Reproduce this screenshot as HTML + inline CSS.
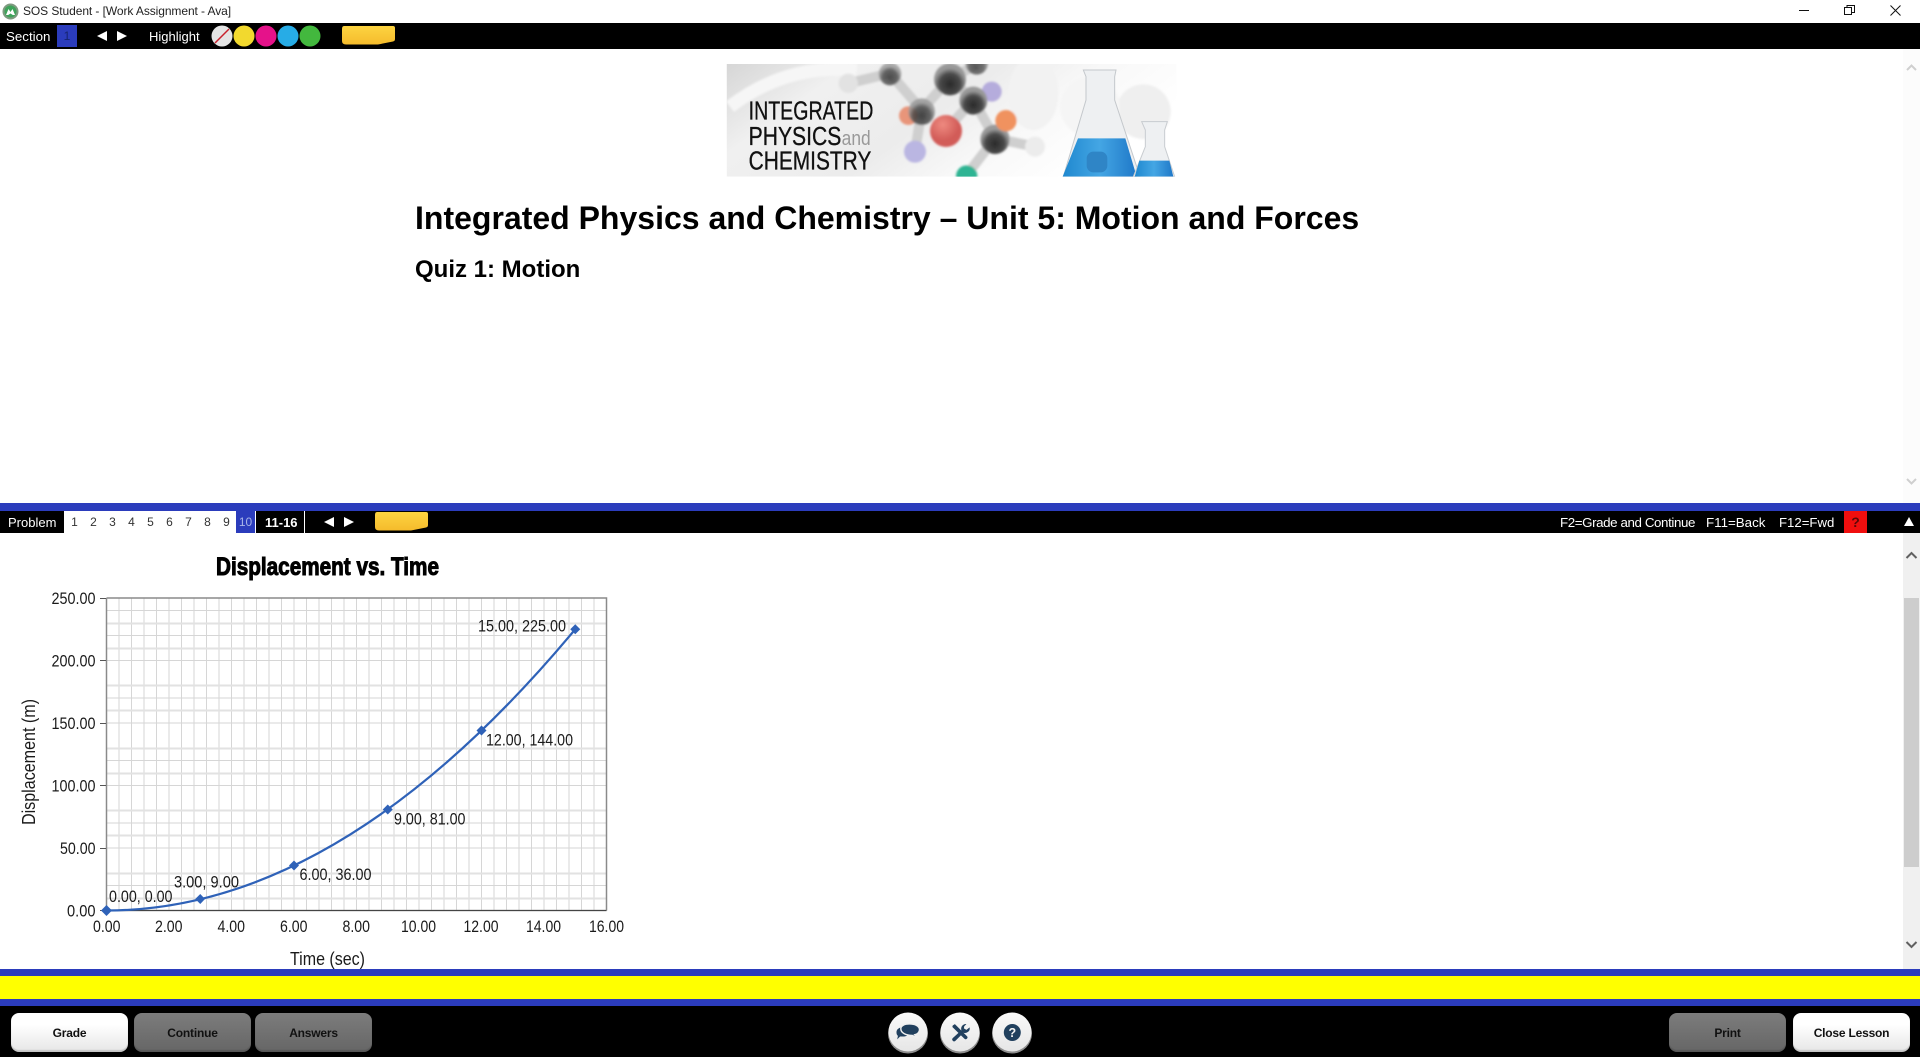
<!DOCTYPE html>
<html><head><meta charset="utf-8"><title>SOS Student</title>
<style>
*{box-sizing:border-box}
html,body{margin:0;padding:0;width:1920px;height:1057px;overflow:hidden;background:#fff;font-family:"Liberation Sans",sans-serif}
.a{position:absolute}
.t{position:absolute;white-space:nowrap;line-height:1}
.btn{position:absolute;top:1013px;height:39px;width:117px;border-radius:8px;font:bold 12px "Liberation Sans",sans-serif;letter-spacing:-.2px;color:#111;display:flex;align-items:center;justify-content:center;box-shadow:inset 0 -2px 1px rgba(0,0,0,.15)}
.on{background:linear-gradient(#fff 30%,#e6e6e6)}
.off{background:linear-gradient(#7c7c7c,#666)}
.n{position:absolute;top:511px;height:22px;width:19px;text-align:center;font-size:12px;line-height:22px;color:#333}
h1,h2{margin:0;position:absolute;white-space:nowrap;color:#000;font-weight:bold}
</style></head><body>

<!-- title bar -->
<svg class="a" style="left:2px;top:3px" width="17" height="17" viewBox="0 0 17 17"><circle cx="8.5" cy="8.5" r="8" fill="#7f9a80"/><circle cx="8.5" cy="8.5" r="6" fill="#3fa35a"/><path d="M4 12 L6.500 6 L8.500 9 L10.500 6 L13 12 L10.800 12 L8.500 10.500 L6.200 12Z" fill="#fff"/></svg>
<div class="t" style="left:23px;top:5px;font-size:12px;letter-spacing:-.08px;color:#222">SOS Student - [Work Assignment - Ava]</div>
<svg class="a" style="left:1790px;top:0" width="120" height="22" fill="none" stroke="#111" stroke-width="1">
<path d="M9 10.5H19"/><rect x="54.5" y="7.5" width="7" height="7"/><path d="M57 7.5V5.5H64.5V12.5H61.5"/><path d="M100.5 5.5L110.5 15.5M110.5 5.5L100.5 15.5"/></svg>

<!-- section toolbar -->
<div class="a" style="left:0;top:23px;width:1920px;height:26px;background:#000"></div>
<div class="t" style="left:6px;top:29.5px;font-size:13.33px;color:#fff">Section</div>
<div class="a" style="left:57px;top:25px;width:20px;height:22px;background:#2b3cbc;color:#16246e;font-size:12px;text-align:center;line-height:22px">1</div>
<div class="t" style="left:149px;top:29.5px;font-size:13px;color:#fff">Highlight</div>
<svg class="a" style="left:90px;top:23px" width="320" height="26">
<polygon points="7,13 17,8 17,18" fill="#fff"/><polygon points="27,8 27,18 37,13" fill="#fff"/>
<circle cx="132" cy="13" r="10.5" fill="#e4e4e4"/><path d="M125 20L139 6" stroke="#c8202c" stroke-width="1.5"/>
<circle cx="154" cy="13" r="10.5" fill="#f2d92e"/><circle cx="176" cy="13" r="10.5" fill="#e5128a"/>
<circle cx="198" cy="13" r="10.5" fill="#27ace6"/><circle cx="220" cy="13" r="10.5" fill="#43b83e"/>
<defs><linearGradient id="st" x1="0" y1="0" x2="0" y2="1"><stop offset="0" stop-color="#fdd441"/><stop offset="1" stop-color="#f5bb2c"/></linearGradient></defs>
<path d="M254 3H303Q305 3 305 5V16Q305 18 303 18.500L288 21.500H256Q252 21.500 252 18V6Q252 3 254 3Z" fill="url(#st)"/>
</svg>

<!-- upper content -->
<svg class="a" style="left:700px;top:50px" width="500" height="140" viewBox="0 0 1500 420">
<defs>
<clipPath id="lc"><rect x="80" y="42" width="1350" height="338"/></clipPath>
<linearGradient id="bg" x1="0" y1="0" x2="1" y2="0.35"><stop offset="0" stop-color="#d6d6d6"/><stop offset=".25" stop-color="#f0f0f0"/><stop offset=".55" stop-color="#ececec"/><stop offset=".75" stop-color="#f8f8f8"/><stop offset="1" stop-color="#fff"/></linearGradient>
<linearGradient id="fl" x1="0" y1="0" x2="1" y2="0"><stop offset="0" stop-color="#1f88cf"/><stop offset=".5" stop-color="#44a6e4"/><stop offset="1" stop-color="#1f78c8"/></linearGradient>
<radialGradient id="dk" cx=".5" cy=".65"><stop offset="0" stop-color="#2a2a2a"/><stop offset=".65" stop-color="#4a4a4a"/><stop offset="1" stop-color="#9a9a9a"/></radialGradient>
<radialGradient id="rd" cx=".4" cy=".3"><stop offset="0" stop-color="#ee8a80"/><stop offset="1" stop-color="#d25c58"/></radialGradient>
<filter id="bl" x="-5%" y="-5%" width="110%" height="110%"><feGaussianBlur stdDeviation="3"/></filter>
</defs>
<g clip-path="url(#lc)">
<rect x="80" y="42" width="1350" height="338" fill="url(#bg)"/>
<g filter="url(#bl)">
<ellipse cx="1000" cy="130" rx="75" ry="110" fill="#f2f2f2"/>
<circle cx="1330" cy="185" r="82" fill="#efefef"/><circle cx="1170" cy="170" r="90" fill="#f5f5f5"/>
<path d="M90 170Q260 40 470 60" stroke="#f6f6f6" stroke-width="40" fill="none"/>
<g stroke="#cfcfcf" stroke-width="30" fill="none">
<path d="M445 100L570 70L665 180L750 85L820 150L885 265L1005 290"/><path d="M665 180L645 305"/><path d="M885 265L800 375"/><path d="M820 150L738 240"/><path d="M750 85L830 45"/></g>
<circle cx="445" cy="100" r="29" fill="#e2e2e2"/><circle cx="570" cy="72" r="34" fill="url(#dk)" opacity=".8"/><circle cx="830" cy="40" r="34" fill="url(#dk)" opacity=".75"/>
<circle cx="625" cy="197" r="28" fill="#e8957a"/><circle cx="665" cy="185" r="40" fill="url(#dk)" opacity=".85"/>
<circle cx="750" cy="88" r="48" fill="url(#dk)"/>
<circle cx="875" cy="125" r="30" fill="#b5acdc"/><circle cx="820" cy="152" r="42" fill="url(#dk)"/>
<circle cx="645" cy="305" r="33" fill="#bab6e2"/><circle cx="738" cy="243" r="48" fill="url(#rd)"/>
<circle cx="1005" cy="290" r="30" fill="#ececec"/><circle cx="885" cy="268" r="44" fill="url(#dk)"/><circle cx="918" cy="212" r="32" fill="#f0925e"/>
<circle cx="800" cy="378" r="32" fill="#2fb493"/>
</g>
<!-- flasks -->
<path d="M1150 60H1248L1244 80V150L1320 380H1090L1158 150V80Z" fill="#eef0f2" stroke="#c4c8cc" stroke-width="3"/>
<path d="M1134 265H1276L1310 380H1088Z" fill="url(#fl)"/>
<rect x="1160" y="305" width="62" height="62" rx="20" fill="#2f85c6"/>
<path d="M1325 215H1402L1394 240V290L1424 380H1300L1336 290V240Z" fill="#eef0f2" stroke="#c8ccd0" stroke-width="3"/>
<path d="M1318 332H1408L1420 380H1304Z" fill="url(#fl)"/>
</g>
<g font-family="'Liberation Sans',sans-serif" fill="#111" stroke="#111" stroke-width="1">
<text x="146" y="208" font-size="78" textLength="374" lengthAdjust="spacingAndGlyphs">INTEGRATED</text>
<text x="146" y="285" font-size="78" textLength="278" lengthAdjust="spacingAndGlyphs">PHYSICS</text>
<text x="425" y="285" font-size="62" fill="#999" stroke="none" textLength="87" lengthAdjust="spacingAndGlyphs">and</text>
<text x="146" y="358" font-size="78" textLength="368" lengthAdjust="spacingAndGlyphs">CHEMISTRY</text></g>
</svg>
<h1 style="left:415px;top:200px;font-size:32px;line-height:37px">Integrated Physics and Chemistry – Unit 5: Motion and Forces</h1>
<h2 style="left:415px;top:256px;font-size:24px;line-height:28px">Quiz 1: Motion</h2>
<div class="a" style="left:1903px;top:49px;width:17px;height:454px;background:#fcfcfc"></div>
<svg class="a" style="left:1903px;top:49px" width="17" height="454" fill="none" stroke="#cfcfcf" stroke-width="2"><path d="M4 21L8.5 16.5L13 21"/><path d="M4 430L8.5 434.500L13 430"/></svg>

<!-- problem bar -->
<div class="a" style="left:0;top:503px;width:1920px;height:8px;background:#2b3cbc"></div>
<div class="a" style="left:0;top:511px;width:1920px;height:22px;background:#000"></div>
<div class="t" style="left:8px;top:515.500px;font-size:13px;color:#fff">Problem</div>
<div class="a" style="left:64px;top:511px;width:172px;height:22px;background:#fff"></div>
<div class="n" style="left:65px">1</div><div class="n" style="left:84px">2</div><div class="n" style="left:103px">3</div><div class="n" style="left:122px">4</div><div class="n" style="left:141px">5</div><div class="n" style="left:160px">6</div><div class="n" style="left:179px">7</div><div class="n" style="left:198px">8</div><div class="n" style="left:217px">9</div>
<div class="n" style="left:236px;background:#2b3cbc;color:#a8b4e8">10</div>
<div class="a" style="left:255px;top:511px;width:1px;height:22px;background:#fff"></div>
<div class="t" style="left:265px;top:516px;font-size:13px;font-weight:bold;color:#fff">11-16</div>
<div class="a" style="left:304px;top:511px;width:1px;height:22px;background:#fff"></div>
<svg class="a" style="left:320px;top:511px" width="115" height="22">
<polygon points="4,11 14,6 14,16" fill="#fff"/><polygon points="24,6 24,16 34,11" fill="#fff"/>
<path d="M57 1H106Q108 1 108 3V14Q108 16 106 16.500L91 19.500H59Q55 19.500 55 16V4Q55 1 57 1Z" fill="url(#st)"/></svg>
<div class="t" style="left:1560px;top:515.500px;font-size:13.33px;letter-spacing:-.4px;color:#fff">F2=Grade and Continue</div>
<div class="t" style="left:1706px;top:515.500px;font-size:13.33px;color:#fff">F11=Back</div>
<div class="t" style="left:1779px;top:515.500px;font-size:13.2px;color:#fff">F12=Fwd</div>
<div class="a" style="left:1844px;top:511px;width:23px;height:22px;background:#f00e0e;color:#5a0808;font-size:14px;font-weight:bold;text-align:center;line-height:22px">?</div>
<svg class="a" style="left:1900px;top:511px" width="20" height="22"><polygon points="4,15 14,15 9,6" fill="#fff"/></svg>

<!-- scrollbar lower -->
<div class="a" style="left:1903px;top:533px;width:17px;height:436px;background:#f0f0f0"></div>
<div class="a" style="left:1904px;top:598px;width:15px;height:269px;background:#cdcdcd"></div>
<svg class="a" style="left:1903px;top:533px" width="17" height="436" fill="none" stroke="#606060" stroke-width="2"><path d="M3.500 25L8.500 20L13.500 25"/><path d="M3.500 409L8.500 414L13.500 409"/></svg>

<!-- chart -->
<svg class="a" style="left:0;top:533px" width="660" height="436" viewBox="0 533 660 436" font-family="'Liberation Sans',sans-serif" fill="#1a1a1a">
<g id="grid" stroke="#d6d6d6" stroke-width="1" fill="none">
<path d="M119 598V910M131.500 598V910M144 598V910M156.500 598V910M169 598V910M181.500 598V910M194 598V910M206.500 598V910M219 598V910M231.500 598V910M244 598V910M256.500 598V910M269 598V910M281.500 598V910M294 598V910M306.500 598V910M319 598V910M331.500 598V910M344 598V910M356.500 598V910M369 598V910M381.500 598V910M394 598V910M406.500 598V910M419 598V910M431.500 598V910M444 598V910M456.500 598V910M469 598V910M481.500 598V910M494 598V910M506.500 598V910M519 598V910M531.500 598V910M544 598V910M556.500 598V910M569 598V910M581.500 598V910M594 598V910"/>
<path d="M106 610.500H606M106 635.500H606M106 660.500H606M106 698H606M106 723H606M106 760.500H606M106 785.500H606M106 823H606M106 848H606M106 885.500H606"/>
<path d="M106 623.500H606M106 648.500H606M106 685.500H606M106 710.500H606M106 748.500H606M106 773.500H606M106 810.500H606M106 835.500H606M106 873.500H606M106 898.500H606" stroke="#e2e2e2" stroke-width="2"/>
</g>
<path d="M106.500 598H606.500V910.500M106.500 598V910.500H606.500" fill="none" stroke="#8a8a8a" stroke-width="1.500"/>
<path d="M106.500 910.500H606.500" stroke="#444" stroke-width="1"/>
<path d="M100 598.500H106M100 660.500H106M100 723.500H106M100 785.500H106M100 848.500H106M100 910.500H106" stroke="#555"/>
<path d="M106.500 910.500Q340.900 910.500 575.250 629.250" fill="none" stroke="#2f62b8" stroke-width="2.200"/>
<g fill="#2f62b8"><path d="M106.500 905L112 910.500L106.500 916L101 910.500Z"/><path d="M200.250 894L205 899L200.250 904L195.250 899Z"/><path d="M294 860.500L299 865.500L294 870.500L289 865.500Z"/><path d="M387.750 804.500L392.750 809.500L387.750 814.500L382.750 809.500Z"/><path d="M481.500 725.500L486.500 730.500L481.500 735.500L476.500 730.500Z"/><path d="M575.250 624.250L580.250 629.250L575.250 634.250L570.250 629.250Z"/></g>
<text x="216" y="575" font-size="25" font-weight="bold" textLength="223" lengthAdjust="spacingAndGlyphs" fill="#000" stroke="#000" stroke-width="1">Displacement vs. Time</text>
<g font-size="16.500">
<text x="51.500" y="604" textLength="44" lengthAdjust="spacingAndGlyphs">250.00</text>
<text x="51.500" y="666.500" textLength="44" lengthAdjust="spacingAndGlyphs">200.00</text>
<text x="51.500" y="729" textLength="44" lengthAdjust="spacingAndGlyphs">150.00</text>
<text x="51.500" y="791.500" textLength="44" lengthAdjust="spacingAndGlyphs">100.00</text>
<text x="60" y="854" textLength="35.500" lengthAdjust="spacingAndGlyphs">50.00</text>
<text x="67" y="916.500" textLength="28.500" lengthAdjust="spacingAndGlyphs">0.00</text>
<text x="93" y="932" textLength="27.500" lengthAdjust="spacingAndGlyphs">0.00</text>
<text x="155" y="932" textLength="27.500" lengthAdjust="spacingAndGlyphs">2.00</text>
<text x="217.500" y="932" textLength="27.500" lengthAdjust="spacingAndGlyphs">4.00</text>
<text x="280" y="932" textLength="27.500" lengthAdjust="spacingAndGlyphs">6.00</text>
<text x="342.500" y="932" textLength="27.500" lengthAdjust="spacingAndGlyphs">8.00</text>
<text x="401" y="932" textLength="35" lengthAdjust="spacingAndGlyphs">10.00</text>
<text x="463.500" y="932" textLength="35" lengthAdjust="spacingAndGlyphs">12.00</text>
<text x="526" y="932" textLength="35" lengthAdjust="spacingAndGlyphs">14.00</text>
<text x="589" y="932" textLength="35" lengthAdjust="spacingAndGlyphs">16.00</text>
<text x="478" y="631.500" textLength="88" lengthAdjust="spacingAndGlyphs">15.00, 225.00</text>
<text x="486" y="745.500" textLength="87" lengthAdjust="spacingAndGlyphs">12.00, 144.00</text>
<text x="394" y="824.500" textLength="71.500" lengthAdjust="spacingAndGlyphs">9.00, 81.00</text>
<text x="299.500" y="880" textLength="72" lengthAdjust="spacingAndGlyphs">6.00, 36.00</text>
<text x="174" y="887.500" textLength="65" lengthAdjust="spacingAndGlyphs">3.00, 9.00</text>
<text x="109" y="902" textLength="63.500" lengthAdjust="spacingAndGlyphs">0.00, 0.00</text>
<text x="290" y="965" font-size="18" textLength="75" lengthAdjust="spacingAndGlyphs">Time (sec)</text>
<text transform="translate(35 825) rotate(-90)" font-size="18" textLength="126" lengthAdjust="spacingAndGlyphs">Displacement (m)</text>
</g>
</svg>

<!-- yellow status -->
<div class="a" style="left:0;top:969px;width:1920px;height:7px;background:#2b3cbc"></div>
<div class="a" style="left:0;top:976px;width:1920px;height:23px;background:#ffff00"></div>
<div class="a" style="left:0;top:999px;width:1920px;height:7px;background:#2b3cbc"></div>
<div class="a" style="left:0;top:1006px;width:1920px;height:51px;background:#000"></div>

<div class="btn on" style="left:11px">Grade</div>
<div class="btn off" style="left:134px">Continue</div>
<div class="btn off" style="left:255px">Answers</div>
<div class="btn off" style="left:1669px">Print</div>
<div class="btn on" style="left:1793px">Close Lesson</div>

<svg class="a" style="left:880px;top:1006px" width="160" height="51">
<defs><linearGradient id="cb" x1="0" y1="0" x2="0" y2="1"><stop offset="0" stop-color="#fafafa"/><stop offset="1" stop-color="#e6e6e6"/></linearGradient></defs>
<g fill="#8d8d8d"><circle cx="28" cy="27.500" r="20"/><circle cx="80" cy="27.500" r="20"/><circle cx="132" cy="27.500" r="20"/></g>
<g fill="url(#cb)"><circle cx="28" cy="26" r="19.500"/><circle cx="80" cy="26" r="19.500"/><circle cx="132" cy="26" r="19.500"/></g>
<g fill="#21405e">
<g transform="translate(28 25.500) scale(.72) translate(-27 -26)">
<path d="M11 27C11 23 15 20 20 20C25 20 28 23 28 27C28 31 25 33 20 33L16 33L12 37L13 32C11.500 31 11 29 11 27Z"/>
<path d="M17 22C17 18 22 15.500 29 15.500C37 15.500 43 18.500 43 23.500C43 27 40 30 36.500 30.500L41 35L33 31.500C24 31.500 17 28 17 22Z" stroke="#f0f0f0" stroke-width="2"/></g>
<g transform="translate(81 26) scale(.72) translate(-81.500 -26)">
<path d="M70 17L73 15L90 32A2.500 2.500 0 0 1 86.500 35.500L69.500 19Z"/>
<path d="M89 15A6.500 6.500 0 0 0 82 23.500L70 34.500A2.500 2.500 0 0 0 74 38L85 27A6.500 6.500 0 0 0 93.500 19.500L89 23L85.500 21L86 18Z"/></g>
<circle cx="132.300" cy="26.500" r="8.500"/></g>
<text x="132.300" y="31" text-anchor="middle" font-family="'Liberation Sans',sans-serif" font-weight="bold" font-size="12.500" fill="#f4f4f4">?</text>
</svg>
</body></html>
